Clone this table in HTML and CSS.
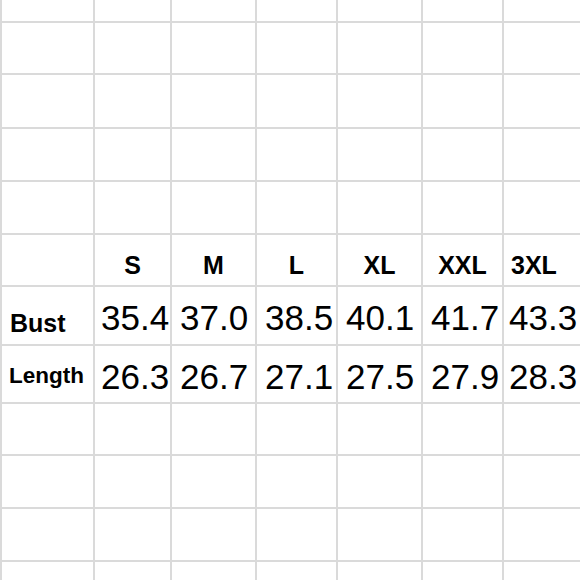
FILE: index.html
```html
<!DOCTYPE html>
<html>
<head>
<meta charset="utf-8">
<link rel="stylesheet" href="styles.css">
</head>
<body>
<div class="sheet">
  <div class="c"></div><div class="c"></div><div class="c"></div><div class="c"></div><div class="c"></div><div class="c"></div><div class="c"></div>
  <div class="c"></div><div class="c"></div><div class="c"></div><div class="c"></div><div class="c"></div><div class="c"></div><div class="c"></div>
  <div class="c"></div><div class="c"></div><div class="c"></div><div class="c"></div><div class="c"></div><div class="c"></div><div class="c"></div>
  <div class="c"></div><div class="c"></div><div class="c"></div><div class="c"></div><div class="c"></div><div class="c"></div><div class="c"></div>
  <div class="c"></div><div class="c"></div><div class="c"></div><div class="c"></div><div class="c"></div><div class="c"></div><div class="c"></div>

  <div class="c"></div>
  <div class="c head">S</div>
  <div class="c head">M</div>
  <div class="c head">L</div>
  <div class="c head">XL</div>
  <div class="c head">XXL</div>
  <div class="c head left">3XL</div>

  <div class="c label bust">Bust</div>
  <div class="c num r1 first">35.4</div>
  <div class="c num r1">37.0</div>
  <div class="c num r1">38.5</div>
  <div class="c num r1">40.1</div>
  <div class="c num r1">41.7</div>
  <div class="c num r1 tight">43.3</div>

  <div class="c label len">Length</div>
  <div class="c num r2 first">26.3</div>
  <div class="c num r2">26.7</div>
  <div class="c num r2">27.1</div>
  <div class="c num r2">27.5</div>
  <div class="c num r2">27.9</div>
  <div class="c num r2 tight">28.3</div>

  <div class="c"></div><div class="c"></div><div class="c"></div><div class="c"></div><div class="c"></div><div class="c"></div><div class="c"></div>
  <div class="c"></div><div class="c"></div><div class="c"></div><div class="c"></div><div class="c"></div><div class="c"></div><div class="c"></div>
  <div class="c"></div><div class="c"></div><div class="c"></div><div class="c"></div><div class="c"></div><div class="c"></div><div class="c"></div>
  <div class="c"></div><div class="c"></div><div class="c"></div><div class="c"></div><div class="c"></div><div class="c"></div><div class="c"></div>
</div>
</body>
</html>
```
FILE: styles.css
```css
html, body {
  margin: 0;
  padding: 0;
  background: #ffffff;
  width: 580px;
  height: 580px;
  overflow: hidden;
}

.sheet {
  display: grid;
  grid-template-columns: 91px 75px 83px 79px 83px 79px 1fr;
  grid-template-rows: 21px 50px 52px 51px 51px 50px 57px 56px 50px 51px 51px 18px;
  gap: 2px;
  padding-left: 2px;
  background: #dadada;
  width: 578px;
  height: 580px;
  overflow: hidden;
  font-family: "Liberation Sans", Arial, sans-serif;
  color: #000000;
}

.c {
  background: #ffffff;
  overflow: hidden;
  white-space: nowrap;
  display: flex;
  align-items: flex-end;
  line-height: 1;
  min-width: 0;
}

.head {
  justify-content: center;
  font-weight: bold;
  font-size: 25px;
  padding-bottom: 7px;
}

.head.left {
  justify-content: flex-start;
  padding-left: 7px;
}

.label {
  font-weight: bold;
}

.bust {
  font-size: 25px;
  padding-left: 8px;
  padding-bottom: 8px;
}

.len {
  font-size: 22.5px;
  padding-left: 7px;
  padding-bottom: 15px;
}

.num {
  font-size: 35px;
  padding-left: 8px;
}

.num.first {
  padding-left: 6px;
}

.num.tight {
  padding-left: 5px;
}

.r1 {
  padding-bottom: 9px;
}

.r2 {
  padding-bottom: 8px;
}
```
